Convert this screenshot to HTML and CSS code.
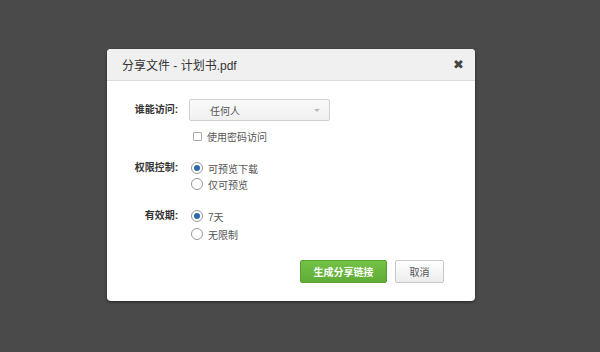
FILE: index.html
```html
<!DOCTYPE html>
<html lang="zh-CN">
<head>
    <meta charset="UTF-8">
    <title>分享文件</title>
    <link rel="stylesheet" href="styles.css">
</head>
<body>
    <div class="dialog">
        <div class="dialog-header">
            <h1>分享文件 - 计划书.pdf</h1>
            <span class="close">&#x2716;</span>
        </div>
        <div class="dialog-body">
            <div class="form-row">
                <label class="row-label">谁能访问:</label>
                <div class="row-field">
                    <div class="select">
                        <span>任何人</span>
                        <span class="caret"></span>
                    </div>
                    <div class="option check-option">
                        <span class="checkbox"></span>
                        <span>使用密码访问</span>
                    </div>
                </div>
            </div>

            <div class="form-row">
                <label class="row-label">权限控制:</label>
                <div class="row-field">
                    <div class="option"><span class="radio checked"></span><span>可预览下载</span></div>
                    <div class="option"><span class="radio"></span><span>仅可预览</span></div>
                </div>
            </div>

            <div class="form-row">
                <label class="row-label">有效期:</label>
                <div class="row-field">
                    <div class="option"><span class="radio checked"></span><span>7天</span></div>
                    <div class="option"><span class="radio"></span><span>无限制</span></div>
                </div>
            </div>

            <div class="actions">
                <button class="btn btn-primary">生成分享链接</button>
                <button class="btn btn-default">取消</button>
            </div>
        </div>
    </div>
</body>
</html>
```

FILE: styles.css
```css
* {
    margin: 0;
    padding: 0;
    box-sizing: border-box;
    font-family: "Liberation Sans", "Noto Sans CJK SC", sans-serif;
}

body {
    background-color: #4a4a4a;
    height: 352px;
    overflow: hidden;
}

.dialog {
    width: 368px;
    height: 252px;
    margin: 49px 0 0 107px;
    background: #fff;
    border-radius: 4px;
    box-shadow: 0 1px 3px rgba(0, 0, 0, 0.5);
    overflow: hidden;
}

.dialog-header {
    height: 32px;
    background: #f0f0f0;
    border-bottom: 1px solid #dcdcdc;
    display: flex;
    align-items: center;
    justify-content: space-between;
    padding: 0 11px 0 15px;
}

.dialog-header h1 {
    font-size: 12px;
    font-weight: normal;
    color: #333;
}

.close {
    font-size: 13px;
    color: #444;
    font-family: "DejaVu Sans", sans-serif;
}

.dialog-body {
    padding: 18px 0 0 0;
}

.form-row {
    display: flex;
    margin-bottom: 16px;
}

.form-row:nth-child(3) .option + .option {
    margin-top: 2px;
}

.row-label {
    width: 82px;
    padding-right: 11px;
    text-align: right;
    font-size: 10px;
    color: #333;
    font-weight: bold;
    line-height: 16px;
}

.form-row:first-child .row-label {
    line-height: 22px;
}

.select {
    width: 141px;
    height: 22px;
    border: 1px solid #d0d0d0;
    border-radius: 2px;
    background: linear-gradient(#fafafa, #f0f0f0);
    display: flex;
    align-items: center;
    justify-content: space-between;
    padding: 0 9px 0 20px;
    font-size: 10px;
    color: #555;
}

.caret {
    width: 0;
    height: 0;
    border-left: 3px solid transparent;
    border-right: 3px solid transparent;
    border-top: 3px solid #bbb;
}

.option {
    display: flex;
    align-items: center;
    height: 16px;
    font-size: 10px;
    color: #555;
}

.check-option {
    margin-top: 7px;
    padding-left: 4px;
}

.checkbox {
    width: 9px;
    height: 9px;
    border: 1px solid #aaa;
    border-radius: 1px;
    background: #fff;
    margin-right: 5px;
}

.radio {
    width: 12px;
    height: 12px;
    border: 1px solid #999;
    border-radius: 50%;
    margin: 0 5px 0 2px;
    display: flex;
    align-items: center;
    justify-content: center;
    background: #fff;
}

.radio.checked::after {
    content: "";
    width: 6px;
    height: 6px;
    border-radius: 50%;
    background: #2a6bb0;
}

.actions {
    display: flex;
    justify-content: flex-end;
    gap: 8px;
    padding: 2px 31px 0 0;
}

.btn {
    height: 23px;
    font-size: 10px;
    border-radius: 2px;
    cursor: pointer;
}

.btn-primary {
    width: 87px;
    color: #fff;
    font-weight: bold;
    border: 1px solid #5a9e32;
    background: linear-gradient(#74c146, #5fad36);
}

.btn-default {
    width: 49px;
    color: #555;
    border: 1px solid #c8c8c8;
    background: linear-gradient(#ffffff, #ececec);
}
```
